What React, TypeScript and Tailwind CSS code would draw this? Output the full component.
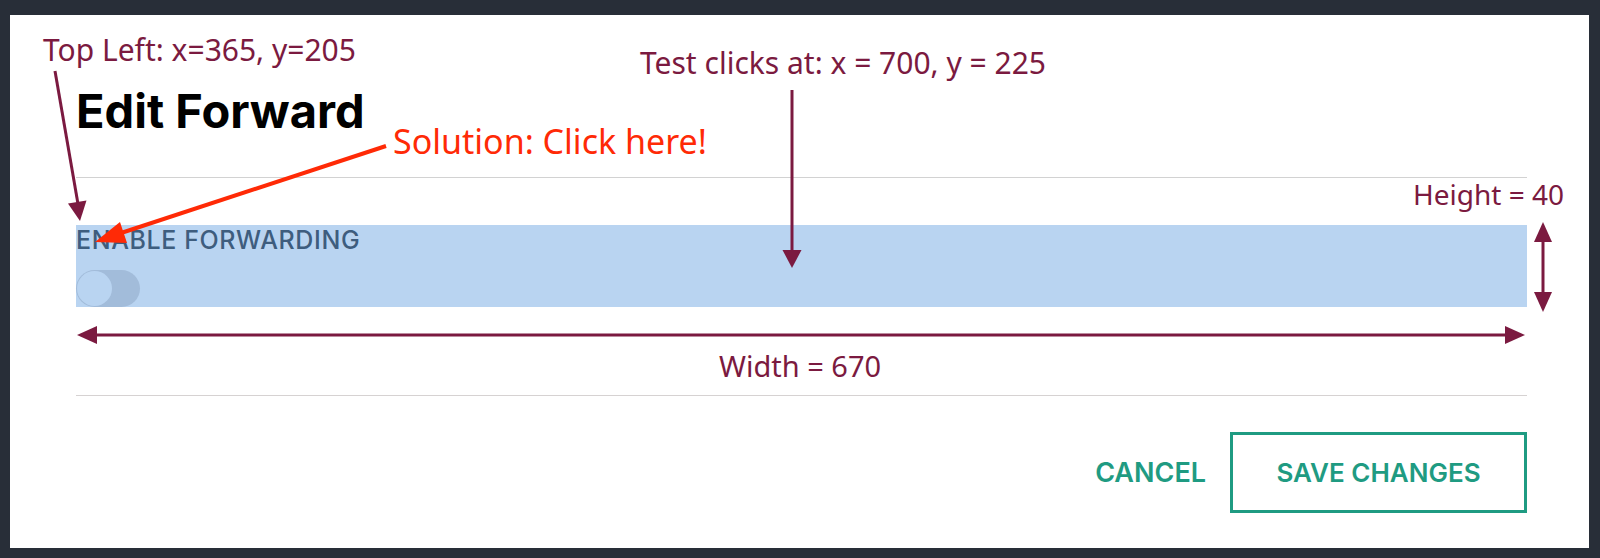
import React from "react";

const MAROON = "#7b1a40";

function Overlay() {
  return (
    <div className="pointer-events-none absolute inset-0">
      <svg width="1600" height="558" className="absolute left-0 top-0">
        {/* Top-left arrow */}
        <line x1="55" y1="71" x2="78" y2="204" stroke={MAROON} strokeWidth="3" />
        <polygon points="68,203.5 86.5,200.5 80,221" fill={MAROON} />
        {/* Red solution arrow */}
        <line x1="386" y1="146" x2="115" y2="235" stroke="#ff2a06" strokeWidth="4" />
        <polygon points="95,242 120,222 127,243" fill="#ff2a06" />
        {/* Test click arrow */}
        <line x1="792" y1="90" x2="792" y2="252" stroke={MAROON} strokeWidth="3" />
        <polygon points="782.5,250 801.5,250 792,268" fill={MAROON} />
        {/* Height double arrow */}
        <line x1="1543" y1="238" x2="1543" y2="296" stroke={MAROON} strokeWidth="3" />
        <polygon points="1543,222 1552,242 1534,242" fill={MAROON} />
        <polygon points="1543,312 1552,292 1534,292" fill={MAROON} />
        {/* Width double arrow */}
        <line x1="92" y1="335" x2="1510" y2="335" stroke={MAROON} strokeWidth="3" />
        <polygon points="77,335 97,326 97,344" fill={MAROON} />
        <polygon points="1525,335 1505,326 1505,344" fill={MAROON} />
      </svg>
      <div
        className="absolute left-[43px] top-[35px] whitespace-nowrap text-[30px] leading-[30px] text-[#7b1a40]"
        style={{ fontFamily: '"Noto Sans", "Open Sans", sans-serif' }}
      >
        Top Left: x=365, y=205
      </div>
      <div
        className="absolute left-[640px] top-[48px] whitespace-nowrap text-[30px] leading-[30px] text-[#7b1a40]"
        style={{ fontFamily: '"Noto Sans", "Open Sans", sans-serif' }}
      >
        Test clicks at: x = 700, y = 225
      </div>
      <div
        className="absolute left-[393px] top-[124px] whitespace-nowrap text-[34px] leading-[34px] text-[#ff2a06]"
        style={{ fontFamily: '"Noto Sans", "Open Sans", sans-serif' }}
      >
        Solution: Click here!
      </div>
      <div
        className="absolute left-[1413px] top-[180px] whitespace-nowrap text-[28px] leading-[28px] text-[#7b1a40]"
        style={{ fontFamily: '"Noto Sans", "Open Sans", sans-serif' }}
      >
        Height = 40
      </div>
      <div
        className="absolute left-[719px] top-[351px] whitespace-nowrap text-[29px] leading-[29px] text-[#7b1a40]"
        style={{ fontFamily: '"Noto Sans", "Open Sans", sans-serif' }}
      >
        Width = 670
      </div>
    </div>
  );
}

export default function App() {
  return (
    <div className="relative h-[558px] w-[1600px] overflow-hidden bg-[#282e38] pl-[10px] pt-[15px]">
      <div
        className="flex h-[533px] w-[1579px] flex-col bg-white pl-[66px] pr-[62px]"
        style={{ fontFamily: 'Inter, "Liberation Sans", sans-serif' }}
      >
        <h1 className="mt-[72px] h-[47px] text-[47px] font-bold leading-[47px] text-black">
          Edit Forward
        </h1>
        <div className="mt-[43px] h-px bg-[#d2d2d2]" />
        <section className="mt-[47px] flex h-[82px] flex-col bg-[#b9d4f1] pt-[3px]">
          <div className="h-[25px] text-[25px] font-medium leading-[25px] tracking-[0.6px] text-[#3e5d7e]">
            ENABLE FORWARDING
          </div>
          <div className="mt-[17px] flex h-[37px] w-[64px] items-center rounded-full bg-[#a2bcda] pl-[1px]">
            <div className="h-[35px] w-[35px] rounded-full bg-[#b9d4f1]" />
          </div>
        </section>
        <div className="mt-[88px] h-px bg-[#d6d2d2]" />
        <div className="mt-[36px] flex items-center justify-end gap-[24px]">
          <button className="text-[27px] font-semibold leading-[27px] text-[#1f9b82]">CANCEL</button>
          <button className="flex h-[81px] w-[297px] items-center justify-center border-[3px] border-[#1f9b82] text-[26px] font-semibold leading-[26px] text-[#1f9b82]">
            SAVE CHANGES
          </button>
        </div>
      </div>
      <Overlay />
    </div>
  );
}
